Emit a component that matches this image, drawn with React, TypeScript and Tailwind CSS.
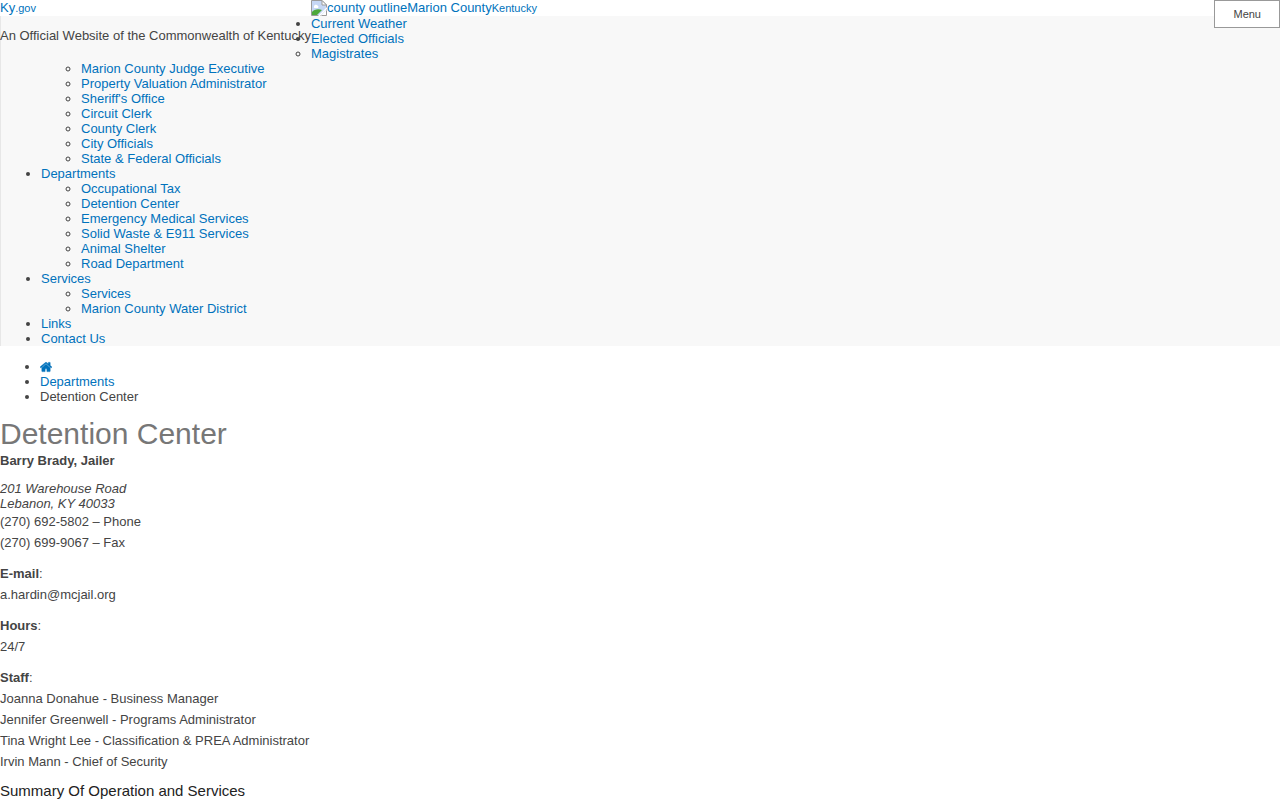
import type { ReactNode } from 'react';

type NavItem = {
  label: string;
  children?: string[];
};

const navItems: NavItem[] = [
  { label: 'Current Weather' },
  {
    label: 'Elected Officials',
    children: [
      'Magistrates',
      'Marion County Judge Executive',
      'Property Valuation Administrator',
      "Sheriff's Office",
      'Circuit Clerk',
      'County Clerk',
      'City Officials',
      'State & Federal Officials',
    ],
  },
  {
    label: 'Departments',
    children: [
      'Occupational Tax',
      'Detention Center',
      'Emergency Medical Services',
      'Solid Waste & E911 Services',
      'Animal Shelter',
      'Road Department',
    ],
  },
  { label: 'Services', children: ['Services', 'Marion County Water District'] },
  { label: 'Links' },
  { label: 'Contact Us' },
];

const staff: string[] = [
  'Joanna Donahue - Business Manager',
  'Jennifer Greenwell - Programs Administrator',
  'Tina Wright Lee - Classification & PREA Administrator',
  'Irvin Mann - Chief of Security',
];

const Link = ({ children }: { children: ReactNode }) => (
  <a href="#" className="text-[#0072bc]">
    {children}
  </a>
);

const HomeIcon = () => (
  <svg viewBox="0 128 1664 1536" className="inline-block h-3 w-3 align-[-2px]" fill="currentColor" stroke="currentColor" strokeWidth="70" role="img" aria-label="Home">
    <path d="M1408 992v480q0 26-19 45t-45 19h-384v-384h-256v384h-384q-26 0-45-19t-19-45v-480q0-1 .5-3t.5-3l575-474 575 474q1 2 1 6zm223-69l-62 74q-8 9-21 11h-3q-13 0-21-7l-692-577-692 577q-12 8-24 7-13-2-21-11l-62-74q-8-10-7-23.5t11-21.5l719-599q32-26 76-26t76 26l244 204v-195q0-14 9-23t23-9h192q14 0 23 9t9 23v408l219 182q10 8 11 21.5t-7 23.5z" />
  </svg>
);

const PictureIcon = () => (
  <svg viewBox="0 0 16 16" className="h-4 w-4 shrink-0" aria-hidden="true">
    <path d="M.5.5H11L15.500 5V15.500H.5z" fill="#c6d7f5" stroke="#9a9a9a" />
    <path d="M11 .5V5h4.500z" fill="#fff" stroke="#9a9a9a" />
    <path d="M3 6.500a2 2 0 0 1 3.500-1A1.500 1.500 0 0 1 7 8H3.500A1 1 0 0 1 3 6.500z" fill="#fff" />
    <path d="M1 15v-3C3 9.500 7 8.500 11 10l-5 5z" fill="#4ea83a" />
    <path d="M16 7L7 16h2l7-7z" fill="#fff" />
    <path d="M9.500 16L16 9.500V16z" fill="#fff" />
    <path d="M10.500 15.500h5v-5" fill="none" stroke="#9a9a9a" />
  </svg>
);

const MainNav = () => (
  <nav className="border-l border-[#e7e7e7] bg-[#f8f8f8]">
    <ul className="list-disc pl-10">
      {navItems.map((item) => (
        <li key={item.label}>
          <Link>{item.label}</Link>
          {item.children && (
            <ul className="list-[circle] pl-10">
              {item.children.map((child) => (
                <li key={child}>
                  <Link>{child}</Link>
                </li>
              ))}
            </ul>
          )}
        </li>
      ))}
    </ul>
  </nav>
);

const App = () => {
  return (
    <div className="relative bg-white font-['Liberation_Sans',Arial,sans-serif] text-[13px] leading-[15px] text-[#444]">
      <header>
        {/* the first nav rows wrap round this block */}
        <div className="float-left">
          <Link>
            Ky<span className="text-[11px]">.gov</span>
          </Link>
          <p className="my-[9px] leading-[21px]">An Official Website of the Commonwealth of Kentucky</p>
        </div>
        <a href="#" className="flex h-4 text-[#0072bc]">
          <PictureIcon />
          <span>
            county outlineMarion County<span className="text-[11px]">Kentucky</span>
          </span>
        </a>
        <button
          type="button"
          className="absolute top-0 right-0 h-7 border border-[#999] bg-white px-[18px] text-[11px]"
        >
          Menu
        </button>
        <MainNav />
      </header>

      <main>
        <ul className="mt-[13px] list-disc pl-10">
          <li>
            <Link>
              <HomeIcon />
            </Link>
          </li>
          <li>
            <Link>Departments</Link>
          </li>
          <li>Detention Center</li>
        </ul>

        <h1 className="mt-[13px] text-[30px] leading-[33px] text-[#777]">Detention Center</h1>
        <div className="flex flex-col gap-[10px] leading-[21px]">
          <p className="font-bold">Barry Brady, Jailer</p>
          <div>
            <address className="leading-[15px]">
              201 Warehouse Road
              <br />
              Lebanon, KY 40033
            </address>
            <p>(270) 692-5802 – Phone</p>
            <p>(270) 699-9067 – Fax</p>
          </div>
          <p>
            <strong>E-mail</strong>:<br />
            a.hardin@mcjail.org
          </p>
          <p>
            <strong>Hours</strong>:<br />
            24/7
          </p>
          <div>
            <p>
              <strong>Staff</strong>:
            </p>
            {staff.map((person) => (
              <p key={person}>{person}</p>
            ))}
          </div>
          <h2 className="text-[15px] leading-[18px] text-[#222]">Summary Of Operation and Services</h2>
        </div>
      </main>
    </div>
  );
};

export default App;
